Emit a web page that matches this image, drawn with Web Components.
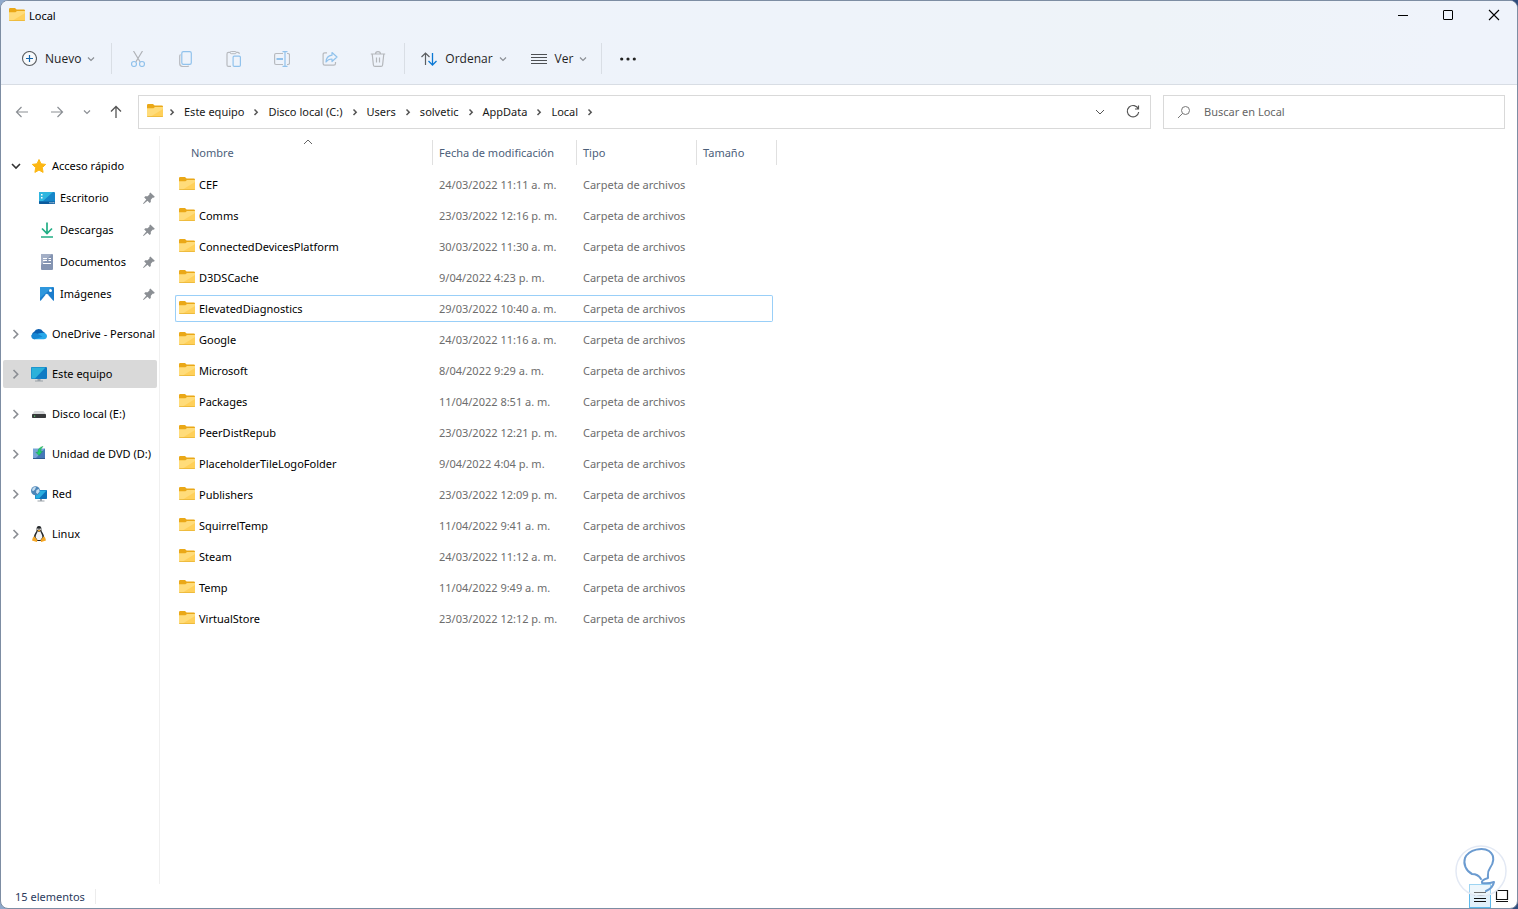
<!DOCTYPE html>
<html lang="es">
<head>
<meta charset="utf-8">
<title>Local</title>
<style>
    html, body {
        height: 100%;
        margin: 0;
    }

    body {
        background: linear-gradient(90deg, #8fa9cc, #2f4c7c);
        font-family: "Noto Sans", "Open Sans", sans-serif;
        font-size: 11px;
        line-height: 16px;
        color: #000;
    }
</style>
</head>
<body>

<explorer-window>
    <title-bar slot="title" icon="folder">Local</title-bar>
    <command-bar slot="commands"></command-bar>
    <address-bar slot="address" path="Este equipo|Disco local (C:)|Users|solvetic|AppData|Local"></address-bar>
    <nav-tree slot="nav">
        <nav-item icon="star" state="open">Acceso rápido</nav-item>
        <nav-item icon="desktop" pinned>Escritorio</nav-item>
        <nav-item icon="download" pinned>Descargas</nav-item>
        <nav-item icon="document" pinned>Documentos</nav-item>
        <nav-item icon="picture" pinned>Imágenes</nav-item>
        <nav-item icon="cloud" state="closed">OneDrive - Personal</nav-item>
        <nav-item icon="monitor" state="closed" selected>Este equipo</nav-item>
        <nav-item icon="drive" state="closed">Disco local (E:)</nav-item>
        <nav-item icon="dvd" state="closed">Unidad de DVD (D:)</nav-item>
        <nav-item icon="network" state="closed">Red</nav-item>
        <nav-item icon="linux" state="closed">Linux</nav-item>
    </nav-tree>
    <file-list></file-list>
    <status-bar slot="status">15 elementos</status-bar>
</explorer-window>

<script>
const ICONS = {
    folder: `<path fill="#eaa817" d="M0 1.200Q0 0 1.200 0H6l1.600 1.600H14.800Q16 1.600 16 2.800V7H0z"/><path fill="#ffdc7a" d="M0 4.200h6.400L8 3h8v9.200q0 .8-.8.8H.8Q0 13 0 12.200z"/><path fill="#ffd05a" d="M16 5v7.200q0 .8-.8.8H3z"/><path fill="#e9b434" d="M0 12.200h16q0 .8-.8.8H.8Q0 13 0 12.200z"/>`,
    star: `<path fill="#fcb713" stroke="#fcb713" stroke-linejoin="round" d="M8 1.500l2 4.300 4.700.600-3.400 3.200.8 4.800L8 12.100l-4.100 2.300.8-4.800L1.300 6.400 6 5.800z"/>`,
    desktop: `<rect y="2" width="16" height="12" rx="1" fill="#1686c9"/><path fill="#2fb6df" d="M1 2h13L4 11H0V3q0-1 1-1z"/><path fill="#fff" d="M2 4h1.500v1.500H2zM2 7h1.500v1.500H2z"/><path fill="#0b5a9c" d="M0 11.500h16V13q0 1-1 1H1q-1 0-1-1z"/><path fill="#fff" d="M10.500 12.200h1v1h-1zM12.500 12.200h1v1h-1zM14.300 12.200h1v1h-1z"/>`,
    download: `<g fill="none" stroke="#22ae85" stroke-width="1.700"><path d="M8 .5v11M3 6.500l5 5 5-5"/><path d="M2 15h12"/></g>`,
    document: `<rect x="2" y="0" width="12" height="16" rx="1" fill="#8494b2"/><path fill="#a3afc6" d="M3 0h10L2 11V1q0-1 1-1z"/><path stroke="#fff" d="M4 4.500h4M4 6.500h4M9.500 4.500H12M9.500 6.500H12M4 9.500h8" fill="none"/>`,
    picture: `<rect x="1" y="1" width="14" height="14" rx="1" fill="#1b7dcc"/><path fill="#2e97dd" d="M2 1h12L1 12V2q0-1 1-1z"/><path fill="#fff" d="M1.500 15L7 8.200q.8-.8 1.600 0L14.500 15z"/><circle cx="11.500" cy="4.500" r="1.500" fill="#fff"/>`,
    cloud: `<path fill="#0b5fb0" d="M3.500 12.500A3.600 3.600 0 0 1 3.200 5.800 5 5 0 0 1 12 5.500a4 4 0 0 1 1 7z"/><path fill="#28a8ea" d="M2.500 13q1-4.500 5-5.500 2.500-.5 5-.8Q16 7.500 16 10.200q-.3 2.800-3.200 3H4q-.8 0-1.500-.2z"/><path fill="#1686d3" d="M.2 9.500Q1 7 4 7q2 .1 4 1.500l3.500 2.200-8 2.500Q.2 13 .2 9.500z"/>`,
    monitor: `<rect y="1" width="16" height="12" rx="1" fill="#0f7bc4"/><path fill="#2bb1da" d="M1 1.500h13.500L4 12.500H.5V2z"/><path fill="#9aa1a8" d="M6.500 13h3v1.500H12v1H4v-1h2.500z"/>`,
    drive: `<path fill="#d5d7d9" d="M3.500 5h9L15 8.500H1z"/><rect x="1" y="8" width="14" height="4" rx=".7" fill="#37393b"/><path fill="#57d36b" d="M3 9.500h1.200v1.200H3z"/>`,
    dvd: `<rect x="2" y="2.500" width="12" height="10.500" fill="#78a5d6"/><path fill="#4678b8" d="M14 2.500V13H4z"/><path fill="#2e5a92" d="M2 12h12v1H2z"/><path fill="#21d06c" stroke="#0d8f45" stroke-width=".4" d="M12 .4Q9.800 2 9.600 5.300h1.900L8 9.500 4.900 6.300h2Q7 1.200 12 .4z"/>`,
    network: `<rect x="4" y="4" width="12" height="9" rx=".7" fill="#0d72b9"/><path fill="#28aee0" d="M5 4.500h10.500L8 12.500H4.500V5z"/><path fill="#9aa1a8" d="M9 13h2v1.500h2.500v1h-7v-1H9z"/><circle cx="4.500" cy="4.800" r="4.500" fill="#4d86b8"/><path fill="#c6def0" d="M1.500 2.500Q3 .8 5 1.200L4 3.500 2.500 5 1 4.500zM5.500 4l2.500-1 .6 2.500L6.500 8 5 6.500z"/>`,
    linux: `<path fill="#24272a" d="M8 0C5.800 0 5.400 1.700 5.600 4c.1 1.700-2.600 4-2.900 7.500L5 15h6l2.300-3.500C13 8 10.400 5.700 10.400 4 10.600 1.700 10.200 0 8 0z"/><path fill="#f4f4f4" d="M6.600 5.200l1.400.9 1.400-.9c.5 2 2 3.400 2 6L9.500 14h-3l-1.900-2.800c0-2.600 1.600-4 2-6z"/><path fill="#fff" d="M6.300 2.500h1.200V4H6.300zM8.500 2.500h1.200V4H8.500z"/><path fill="#f5a623" d="M6.400 4.500L8 3.800l1.700.7L8 5.800zM3.200 10.300l3.300 4L5.800 16 1 14.600l.8-2.800zM12.800 10.300l-3.300 4 .7 1.700 4.800-1.400-.8-2.800z"/>`,
    pin: `<path fill="#8b8f94" d="M9.300 2.500l4.500 4.300-1 .9-.9-.2-2.100 2.200v2.300l-1.100 1-2.200-2.200L2.600 14l-.6-.5 3.300-3.900L3.200 7.400l1-1.100 2.500-.1 1.900-2-.2-.8z"/>`,
    chevronRight: `<path fill="none" stroke="currentColor" stroke-width="1.600" d="M5.500 4L9.700 8.200 5.500 12.400"/>`,
    chevronDown: `<path fill="none" stroke="currentColor" stroke-width="1.600" d="M4 6l4 4 4-4"/>`,
    chevronThin: `<path fill="none" stroke="currentColor" d="M4 6l4 4 4-4"/>`,
    chevronSmall: `<path fill="none" stroke="currentColor" stroke-width="1.200" d="M5 6.500l3 3 3-3"/>`,
    crumb: `<path fill="none" stroke="currentColor" stroke-width="1.500" d="M6.500 5.500L9.200 8.200 6.500 11"/>`,
    caretUp: `<path fill="none" stroke="currentColor" d="M4 10l4-4 4 4"/>`,
    plus: `<circle cx="8.500" cy="7.500" r="7" fill="#f8fafc" stroke="#5b5e61" stroke-width="1.100"/><path stroke="#1464ab" stroke-width="1.200" d="M8.500 4v7M5 7.500h7"/>`,
    cut: `<path fill="none" stroke="#b0b3b8" stroke-width="1.200" d="M3.500 0l6.700 11M12.500 0L5.800 11"/><g fill="none" stroke="#91c2ec" stroke-width="1.200"><circle cx="4" cy="13" r="2.500"/><circle cx="12" cy="13" r="2.500"/></g>`,
    copy: `<path fill="none" stroke="#b7babf" stroke-width="1.200" d="M2.500 3.500q-.8.600-.8 1.800v7.200q0 3 3 3h4.500q1 0 1.600-.7"/><rect x="3.800" y=".6" width="9.500" height="12.800" rx="1.600" fill="none" stroke="#91c2ec" stroke-width="1.200"/>`,
    paste: `<path fill="none" stroke="#b7babf" stroke-width="1.200" d="M5 15.400H2.500q-1.500 0-1.500-1.500v-11q0-1.500 1.500-1.500h9.500q1.300 0 1.300 1.500"/><rect x="4.200" y=".5" width="6" height="2.200" rx="1" fill="#eef3fa" stroke="#b7babf"/><rect x="7.100" y="5.100" width="7.300" height="10.300" rx="1.200" fill="none" stroke="#91c2ec" stroke-width="1.200"/>`,
    rename: `<path fill="none" stroke="#b7babf" stroke-width="1.200" d="M9 2.500H2Q.6 2.500.6 4v8q0 1.500 1.400 1.500h7M13 2.500h1q1.500 0 1.500 1.500v8q0 1.500-1.500 1.500h-1"/><path fill="none" stroke="#91c2ec" stroke-width="1.200" d="M8.500.6h5M11 .6v14.800M8.500 15.400h5"/><path stroke="#91c2ec" stroke-width="1.800" d="M2.500 8h6.500"/>`,
    share: `<path fill="none" stroke="#b7babf" stroke-width="1.200" d="M5 1.800H2.800q-1.700 0-1.700 1.700v9q0 1.700 1.700 1.700h9q1.700 0 1.700-1.700V11"/><path fill="none" stroke="#91c2ec" stroke-width="1.200" stroke-linejoin="round" d="M10 1.500L15 6l-5 4.500V8Q6 8 4 11q.2-6 6-6.800z"/>`,
    trash: `<path fill="none" stroke="#b4b7bb" stroke-width="1.200" d="M.8 3h14.400M5.500 3Q5.500.6 8 .6T10.500 3M2.200 3l1.200 11q.2 1.400 1.600 1.400h6q1.400 0 1.600-1.400L13.800 3M6.500 6.500v5M9.500 6.500v5"/>`,
    sort: `<path fill="none" stroke="#5b5e61" stroke-width="1.200" d="M4.500 14V2M.5 6l4-4 4 4"/><path fill="none" stroke="#0b78d4" stroke-width="1.300" d="M11.500 2v12M7.500 10l4 4 4-4"/>`,
    lines: `<path stroke="#4d5053" d="M0 3.500h16M0 6.500h16M0 9.500h16M0 12.500h16"/>`,
    more: `<g fill="#222"><circle cx="1.700" cy="8" r="1.600"/><circle cx="8" cy="8" r="1.600"/><circle cx="14.300" cy="8" r="1.600"/></g>`,
    back: `<path fill="none" stroke="currentColor" stroke-width="1.200" d="M14 8H2.500M7.500 3L2.500 8l5 5"/>`,
    forward: `<path fill="none" stroke="currentColor" stroke-width="1.200" d="M2 8h11.500M8.500 3l5 5-5 5"/>`,
    up: `<path fill="none" stroke="currentColor" stroke-width="1.300" d="M8 14V2.500M3 7.500l5-5 5 5"/>`,
    reload: `<path fill="none" stroke="currentColor" stroke-width="1.200" d="M13.300 5A5.700 5.700 0 1 0 13.700 8M13.500 1.500V5H10"/>`,
    search: `<circle cx="9.500" cy="6.500" r="4" fill="none" stroke="#777"/><path stroke="#777" d="M6.700 9.300L2 14"/>`,
    minimize: `<path stroke="#000" d="M4 7.500h10"/>`,
    maximize: `<rect x="3.500" y="2.500" width="9" height="9" rx=".5" fill="none" stroke="#000"/>`,
    close: `<path stroke="#000" stroke-width="1.100" d="M3 2l10 10M13 2L3 12"/>`,
    details: `<path stroke="#111" d="M2 4.500h12M2 7.500h12M2 10.500h12M2 13.500h12"/>`,
    tiles: `<path fill="#fff" stroke="#111" stroke-width="1.200" d="M2.500 2.500h11v9h-11z"/><path stroke="#111" d="M2 13.500h12"/>`,
};

class FxIcon extends HTMLElement {
    connectedCallback() {
        this.attachShadow({ mode: 'open' }).innerHTML = `
            <style>
                :host { display: block; flex: none; width: 16px; height: 16px; }
                svg { display: block; width: 100%; height: 100%; }
            </style>
            <svg viewBox="0 0 16 16" aria-hidden="true">${ICONS[this.getAttribute('name')]}</svg>`;
    }
}

const icon = (name) => `<fx-icon name="${name}"></fx-icon>`;

const BUTTON_RESET = `
    button {
        margin: 0;
        padding: 0;
        border: 0;
        background: none;
        color: inherit;
        font: inherit;
        display: flex;
        align-items: center;
    }`;

class ExplorerWindow extends HTMLElement {
    constructor() {
        super();
        this.attachShadow({ mode: 'open' }).innerHTML = `
            <style>
                :host {
                    box-sizing: border-box;
                    position: relative;
                    display: flex;
                    flex-direction: column;
                    height: 100vh;
                    border: 1px solid #7d8da3;
                    border-radius: 8px;
                    background: #fff;
                    overflow: hidden;
                }
                header {
                    background: linear-gradient(100deg, #eef3fb 0%, #eef3fa 55%, #eef3f8 75%, #eff3fb 95%);
                    border-bottom: 1px solid #d8dde4;
                }
                main { display: flex; flex: 1; min-height: 0; }
                .badge { position: absolute; right: 10px; bottom: 11px; width: 52px; height: 52px; pointer-events: none; }
            </style>
            <header>
                <slot name="title"></slot>
                <slot name="commands"></slot>
            </header>
            <slot name="address"></slot>
            <main>
                <slot name="nav"></slot>
                <slot></slot>
            </main>
            <slot name="status"></slot>
            <svg class="badge" viewBox="0 0 52 52" aria-hidden="true">
                <circle cx="26" cy="26" r="25" fill="#fff" fill-opacity=".4" stroke="#e3e9f4" stroke-width="1.500"/>
                <path fill="none" stroke="#6b9bd0" stroke-width="2" stroke-linecap="round" stroke-linejoin="round"
                    d="M26 34Q23 29 17 29C11 26 8 19 10 13 14 4 28 2 34 6 41 11 38 19 35 23 32 27 33 29 33 33Q26 35 27 38 33 39 39 37 38 43 31 46"/>
            </svg>`;
    }
}

class TitleBar extends HTMLElement {
    connectedCallback() {
        this.attachShadow({ mode: 'open' }).innerHTML = `
            <style>
                :host { display: flex; align-items: center; height: 30px; padding-left: 8px; }
                ${BUTTON_RESET}
                .name { flex: 1; margin-left: 4px; }
                button { width: 46px; height: 28px; justify-content: center; }
            </style>
            ${icon(this.getAttribute('icon'))}
            <span class="name"><slot></slot></span>
            <button aria-label="Minimizar">${icon('minimize')}</button>
            <button aria-label="Maximizar">${icon('maximize')}</button>
            <button aria-label="Cerrar">${icon('close')}</button>`;
    }
}

class CommandBar extends HTMLElement {
    constructor() {
        super();
        const tools = [
            ['cut', 'Cortar'], ['copy', 'Copiar'], ['paste', 'Pegar'],
            ['rename', 'Cambiar nombre'], ['share', 'Compartir'], ['trash', 'Eliminar'],
        ];
        this.attachShadow({ mode: 'open' }).innerHTML = `
            <style>
                :host {
                    box-sizing: border-box;
                    display: flex;
                    align-items: center;
                    height: 53px;
                    padding: 2px 0 0 12px;
                    color: #1f1f1f;
                    font-family: "Open Sans", sans-serif;
                    font-size: 12px;
                }
                ${BUTTON_RESET}
                button { height: 32px; padding: 0 8px; gap: 8px; }
                .tool { width: 48px; padding: 0; justify-content: center; }
                .menu { padding-right: 10px; }
                .menu:first-of-type { padding-right: 12px; }
                .chevron { margin: 0 -2px 0 -6px; color: #8b8f94; }
                .line { width: 1px; height: 31px; margin: 0 2px; background: #d9dee5; }
                .line + .menu { margin-left: 6px; }
                .menu + .menu { margin-left: 4px; }
            </style>
            <button class="menu">${icon('plus')}Nuevo<fx-icon class="chevron" name="chevronSmall"></fx-icon></button>
            <span class="line"></span>
            ${tools.map(([name, label]) => `<button class="tool" aria-label="${label}">${icon(name)}</button>`).join('')}
            <span class="line"></span>
            <button class="menu">${icon('sort')}Ordenar<fx-icon class="chevron" name="chevronSmall"></fx-icon></button>
            <button class="menu">${icon('lines')}Ver<fx-icon class="chevron" name="chevronSmall"></fx-icon></button>
            <span class="line"></span>
            <button class="tool" aria-label="Ver más">${icon('more')}</button>`;
    }
}

class AddressBar extends HTMLElement {
    connectedCallback() {
        const crumbs = this.getAttribute('path').split('|');
        this.attachShadow({ mode: 'open' }).innerHTML = `
            <style>
                :host { display: flex; align-items: center; padding: 10px 12px 7px 3px; color: #191919; }
                ${BUTTON_RESET}
                .history { display: flex; align-items: center; width: 134px; color: #8b8f94; }
                .history button { justify-content: center; width: 35px; height: 32px; }
                .history .recent { width: 25px; }
                .history .up { color: #555; width: 33px; }
                .path, .search {
                    box-sizing: border-box;
                    display: flex;
                    align-items: center;
                    height: 34px;
                    border: 1px solid #d9d9d9;
                }
                .path { flex: 1; min-width: 0; padding: 0 9px 0 8px; }
                .path fx-icon { color: #555; }
                nav { display: flex; align-items: center; flex: 1; margin-left: -3px; }
                nav button { white-space: nowrap; }
                .crumb { margin: 0 4px; }
                .path > button + button { margin-left: 17px; }
                .search { width: 342px; margin-left: 12px; padding: 0 12px; gap: 12px; }
                input {
                    flex: 1;
                    min-width: 0;
                    padding: 0;
                    border: 0;
                    outline: 0;
                    background: none;
                    font: inherit;
                }
                input::placeholder { color: #666; opacity: 1; }
            </style>
            <div class="history">
                <button aria-label="Atrás">${icon('back')}</button>
                <button aria-label="Adelante">${icon('forward')}</button>
                <button class="recent" aria-label="Ubicaciones recientes">${icon('chevronSmall')}</button>
                <button class="up" aria-label="Subir">${icon('up')}</button>
            </div>
            <div class="path">
                ${icon('folder')}
                <nav>
                    <fx-icon class="crumb" name="crumb"></fx-icon>
                    ${crumbs.map((name) => `<button>${name}</button><fx-icon class="crumb" name="crumb"></fx-icon>`).join('')}
                </nav>
                <button aria-label="Ubicaciones anteriores">${icon('chevronThin')}</button>
                <button aria-label="Actualizar">${icon('reload')}</button>
            </div>
            <label class="search">${icon('search')}<input type="search" placeholder="Buscar en Local" aria-label="Buscar en Local"></label>`;
    }
}

class NavTree extends HTMLElement {
    constructor() {
        super();
        this.attachShadow({ mode: 'open' }).innerHTML = `
            <style>
                :host {
                    box-sizing: border-box;
                    display: flex;
                    flex-direction: column;
                    flex: none;
                    width: 159px;
                    padding: 16px 2px 0;
                    border-right: 1px solid #f0f0f0;
                }
                ::slotted([state]:not(:first-child)) { margin-top: 12px; }
                ::slotted([pinned]) { margin-top: 4px; }
            </style>
            <slot></slot>`;
    }
}

class NavItem extends HTMLElement {
    connectedCallback() {
        const state = this.getAttribute('state');
        const arrow = { open: 'chevronDown', closed: 'chevronRight' }[state];
        this.attachShadow({ mode: 'open' }).innerHTML = `
            <style>
                :host { display: block; }
                ${BUTTON_RESET}
                button {
                    box-sizing: border-box;
                    width: 100%;
                    height: 28px;
                    padding-left: 5px;
                    border-radius: 2px;
                    white-space: nowrap;
                    text-align: left;
                }
                :host([selected]) button { background: #d9d9d9; }
                :host([pinned]) button { padding-left: 36px; }
                .arrow { margin-right: 7px; color: #8b8f94; }
                :host([state=open]) .arrow { color: #333; }
                .name { flex: 1; min-width: 0; margin-left: 5px; }
            </style>
            <button>
                ${arrow ? `<fx-icon class="arrow" name="${arrow}"></fx-icon>` : ''}
                ${icon(this.getAttribute('icon'))}
                <span class="name"><slot></slot></span>
                ${this.hasAttribute('pinned') ? icon('pin') : ''}
            </button>`;
    }
}

const FILES = [
    ['CEF', '24/03/2022 11:11 a. m.'],
    ['Comms', '23/03/2022 12:16 p. m.'],
    ['ConnectedDevicesPlatform', '30/03/2022 11:30 a. m.'],
    ['D3DSCache', '9/04/2022 4:23 p. m.'],
    ['ElevatedDiagnostics', '29/03/2022 10:40 a. m.'],
    ['Google', '24/03/2022 11:16 a. m.'],
    ['Microsoft', '8/04/2022 9:29 a. m.'],
    ['Packages', '11/04/2022 8:51 a. m.'],
    ['PeerDistRepub', '23/03/2022 12:21 p. m.'],
    ['PlaceholderTileLogoFolder', '9/04/2022 4:04 p. m.'],
    ['Publishers', '23/03/2022 12:09 p. m.'],
    ['SquirrelTemp', '11/04/2022 9:41 a. m.'],
    ['Steam', '24/03/2022 11:12 a. m.'],
    ['Temp', '11/04/2022 9:49 a. m.'],
    ['VirtualStore', '23/03/2022 12:12 p. m.'],
];

class FileList extends HTMLElement {
    constructor() {
        super();
        this.focused = 'ElevatedDiagnostics';
        this.attachShadow({ mode: 'open' }).innerHTML = `
            <style>
                :host { display: block; flex: 1; min-width: 0; padding-left: 15px; overflow: auto; }
                ${BUTTON_RESET}
                table { table-layout: fixed; width: 602px; border-spacing: 0 4px; }
                .name { width: 258px; }
                .date { width: 144px; }
                .type { width: 120px; }
                .size { width: 76px; }
                th { padding: 0 0 2px; font-weight: normal; }
                th button {
                    box-sizing: border-box;
                    position: relative;
                    width: 100%;
                    height: 25px;
                    padding-left: 6px;
                    border-right: 1px solid #e0e0e0;
                    color: #4c607a;
                    white-space: nowrap;
                }
                th:first-child { padding-left: 8px; }
                th:first-child button { padding-left: 8px; }
                .sort { position: absolute; top: -6px; left: 50%; margin-left: -8px; color: #666; }
                td {
                    box-sizing: border-box;
                    height: 27px;
                    padding: 0 0 0 6px;
                    border: solid transparent;
                    border-width: 1px 0;
                    color: #6d6d6d;
                    white-space: nowrap;
                }
                td:first-child { padding-left: 3px; border-left-width: 1px; color: #000; }
                td:last-child { border-right-width: 1px; }
                .focused td { border-color: #99cff8; }
                .focused td:first-child { border-radius: 2px 0 0 2px; }
                .focused td:last-child { border-radius: 0 2px 2px 0; }
                .file { display: flex; align-items: center; gap: 4px; }
            </style>
            <table>
                <colgroup><col class="name"><col class="date"><col class="type"><col class="size"><col></colgroup>
                <thead>
                    <tr>
                        <th><button>Nombre<fx-icon class="sort" name="caretUp"></fx-icon></button></th>
                        <th><button>Fecha de modificación</button></th>
                        <th><button>Tipo</button></th>
                        <th colspan="2"><button>Tamaño</button></th>
                    </tr>
                </thead>
                <tbody></tbody>
            </table>`;
        this.$rows = this.shadowRoot.querySelector('tbody');
    }

    connectedCallback() {
        this.$rows.innerHTML = FILES.map(([name, date]) => `
            <tr class="${name === this.focused ? 'focused' : ''}">
                <td><span class="file">${icon('folder')}${name}</span></td>
                <td>${date}</td>
                <td>Carpeta de archivos</td>
                <td></td>
            </tr>`).join('');
    }
}

class StatusBar extends HTMLElement {
    constructor() {
        super();
        this.attachShadow({ mode: 'open' }).innerHTML = `
            <style>
                :host { display: flex; align-items: center; height: 24px; padding: 0 5px 0 14px; color: #2b3a5c; }
                ${BUTTON_RESET}
                .count { flex: 1; padding-top: 1px; }
                .count span { padding-right: 10px; border-right: 1px solid #ececec; }
                button { box-sizing: border-box; width: 20px; height: 24px; justify-content: center; }
                .active { width: 22px; margin-right: 1px; border: 1px solid #5db8ea; background: #e2f1fb; }
            </style>
            <div class="count"><span><slot></slot></span></div>
            <button class="active" aria-label="Detalles">${icon('details')}</button>
            <button aria-label="Iconos grandes">${icon('tiles')}</button>`;
    }
}

customElements.define('fx-icon', FxIcon);
customElements.define('explorer-window', ExplorerWindow);
customElements.define('title-bar', TitleBar);
customElements.define('command-bar', CommandBar);
customElements.define('address-bar', AddressBar);
customElements.define('nav-tree', NavTree);
customElements.define('nav-item', NavItem);
customElements.define('file-list', FileList);
customElements.define('status-bar', StatusBar);
</script>
</body>
</html>
